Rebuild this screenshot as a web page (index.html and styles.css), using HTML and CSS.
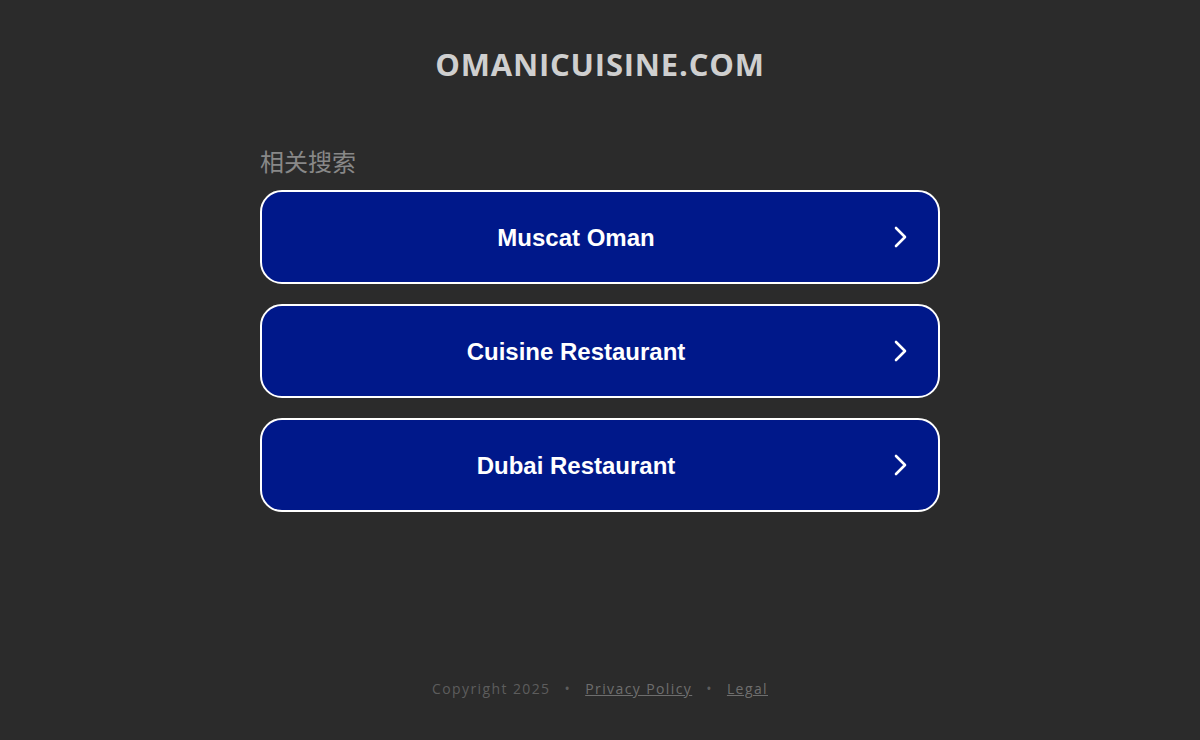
FILE: index.html
```html
<!DOCTYPE html>
<html>
<head>
<meta charset="utf-8">
<link rel="stylesheet" href="styles.css">
</head>
<body>
<div class="page">
  <header class="header"><h1 class="domain">OMANICUISINE.COM</h1></header>
  <main class="main">
    <div class="related">相关搜索</div>
    <div class="list">
      <a class="item" href="#"><span class="label">Muscat Oman</span><svg class="arrow" viewBox="0 0 16 24" width="16" height="24"><path d="M4 3 L13 12 L4 21" fill="none" stroke="#fff" stroke-width="2.6" stroke-linecap="round" stroke-linejoin="round"/></svg></a>
      <a class="item" href="#"><span class="label">Cuisine Restaurant</span><svg class="arrow" viewBox="0 0 16 24" width="16" height="24"><path d="M4 3 L13 12 L4 21" fill="none" stroke="#fff" stroke-width="2.6" stroke-linecap="round" stroke-linejoin="round"/></svg></a>
      <a class="item" href="#"><span class="label">Dubai Restaurant</span><svg class="arrow" viewBox="0 0 16 24" width="16" height="24"><path d="M4 3 L13 12 L4 21" fill="none" stroke="#fff" stroke-width="2.6" stroke-linecap="round" stroke-linejoin="round"/></svg></a>
    </div>
  </main>
  <footer class="footer">
    <span>Copyright 2025</span><span class="dot">•</span><a href="#">Privacy Policy</a><span class="dot">•</span><a href="#">Legal</a>
  </footer>
</div>
</body>
</html>
```
FILE: styles.css
```css
html, body {
  margin: 0;
  padding: 0;
  background: #2b2b2b;
}
.page {
  width: 1200px;
  height: 740px;
  display: flex;
  flex-direction: column;
  align-items: center;
}
.header {
  padding-top: 44px;
  height: 96px;
  box-sizing: border-box;
}
.domain {
  margin: 0;
  font-family: "Open Sans", sans-serif;
  font-weight: 700;
  font-size: 31px;
  line-height: 40px;
  color: #cfcfcf;
  letter-spacing: 0.8px;
}
.main {
  width: 680px;
  margin-top: 48px;
}
.related {
  font-family: "Noto Sans CJK SC", sans-serif;
  font-size: 24px;
  line-height: 34px;
  color: #888888;
  margin-bottom: 12px;
}
.list {
  display: flex;
  flex-direction: column;
  gap: 20px;
}
.item {
  display: flex;
  align-items: center;
  height: 94px;
  box-sizing: border-box;
  border: 2px solid #ffffff;
  border-radius: 22px;
  background: #00188a;
  text-decoration: none;
  padding: 0 30px;
}
.label {
  flex: 1;
  text-align: center;
  font-family: "Liberation Sans", Arial, sans-serif;
  font-weight: 700;
  font-size: 24px;
  line-height: 30px;
  padding-top: 2px;
  color: #ffffff;
  padding-right: 32px;
}
.arrow {
  display: block;
}
.footer {
  margin-top: auto;
  margin-bottom: 42px;
  font-family: "Open Sans", sans-serif;
  font-size: 14px;
  letter-spacing: 1.4px;
  color: #5d5d5d;
  display: flex;
  gap: 14px;
}
.footer a {
  color: #6e6e6e;
  text-decoration: underline;
}
.dot {
  color: #5d5d5d;
}
```
